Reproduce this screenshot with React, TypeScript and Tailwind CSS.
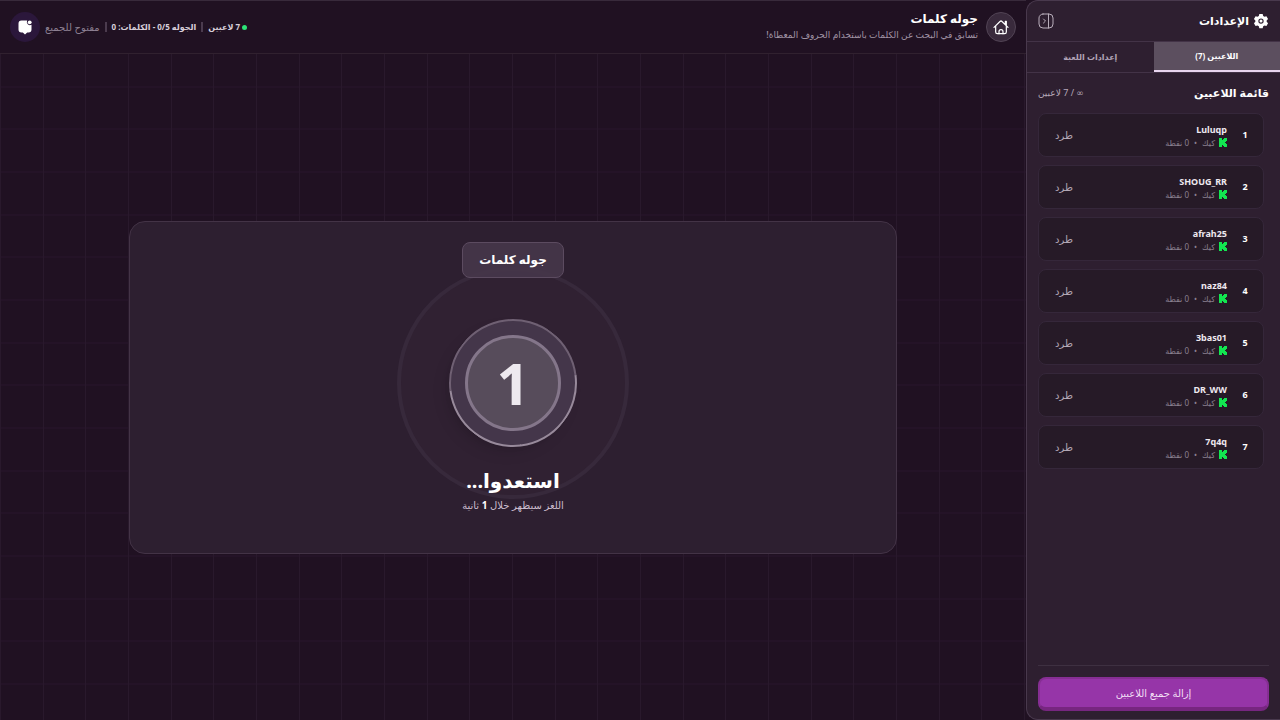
import React from 'react';

const players = ['Luluqp', 'SHOUG_RR', 'afrah25', 'naz84', '3bas01', 'DR_WW', '7q4q'];

const GearIcon = () => (
  <svg viewBox="0 0 24 24" className="size-4" fill="white" aria-hidden="true">
    <path
      fillRule="evenodd"
      d="M9.5 1.500h5l.8 2.900 1.900 1.100 2.900-.8 2.500 4.300-2.100 2.100v2l2.100 2.100-2.500 4.300-2.900-.8-1.900 1.100-.8 2.900h-5l-.8-2.900-1.900-1.100-2.900.8-2.500-4.300 2.100-2.100v-2L1.400 9l2.500-4.300 2.900.8 1.900-1.100.8-2.900ZM12 8.100a4 4 0 1 0 0 8 4 4 0 0 0 0-8Zm0 1.700a2.300 2.300 0 1 1 0 4.600 2.300 2.300 0 0 1 0-4.600Z"
    />
  </svg>
);

const CollapseIcon = () => (
  <svg viewBox="0 0 16 16" className="size-4" fill="none" stroke="currentColor" strokeLinecap="round" strokeLinejoin="round" aria-hidden="true">
    <rect x="1" y="1" width="14" height="14" rx="4" />
    <path d="M10.500 1v14M5.500 6l2 2-2 2" />
  </svg>
);

const HomeIcon = () => (
  <svg viewBox="0 0 24 24" className="size-4" fill="none" stroke="white" strokeWidth="1.800" strokeLinecap="round" strokeLinejoin="round" aria-hidden="true">
    <path d="m1.500 12.500 9-8.800a2.200 2.200 0 0 1 3 0l9 8.800M4 10.500v9A2.500 2.500 0 0 0 6.500 22h11a2.500 2.500 0 0 0 2.500-2.500v-9M18.500 8V3.500H20V9" />
    <path d="M9 22v-3a3 3 0 0 1 6 0v3" />
  </svg>
);

const ChatIcon = () => (
  <svg viewBox="0 0 16 16" className="size-4" fill="white" aria-hidden="true">
    <path d="M4.500 1.500h5.700a3.200 3.200 0 0 0 4.300 4.300v4.700a3 3 0 0 1-3 3h-1.300L8 15.500l-2.200-2H4.500a3 3 0 0 1-3-3v-6a3 3 0 0 1 3-3Z" />
    <circle cx="12.700" cy="3.300" r="1.900" />
  </svg>
);

const KickIcon = () => (
  <svg viewBox="0 0 8 9" className="h-[9px] w-2" fill="#12e650" aria-hidden="true">
    <path d="M0 0h3v2h1V1h1V0h3v3H7v1H6v1h1v1h1v3H5V8H4V7H3v2H0Z" />
  </svg>
);

const PlayerRow = ({ rank, name }: { rank: number; name: string }) => (
  <li className="flex h-11 items-center rounded-lg border border-[#35273a] bg-[#261a27] pr-3 pl-4">
    <span className="w-3 text-center text-[9px] font-bold text-white">{rank}</span>
    <div className="mr-3 flex flex-1 flex-col items-start pt-px">
      <span dir="ltr" className="text-[9px] leading-[14px] font-bold text-[#eee8ef]">{name}</span>
      <span className="flex items-center gap-1 text-[8px] leading-3 text-[#8b8090]">
        <KickIcon />
        <span>كيك</span>
        <span className="px-px">•</span>
        <span>0 نقطة</span>
      </span>
    </div>
    <button type="button" className="text-[10px] text-[#b3a8b6]">طرد</button>
  </li>
);

const Sidebar = () => (
  <aside className="flex w-[254px] shrink-0 flex-col rounded-l-xl border border-r-0 border-[#49394d] bg-[#2e1f30]">
    <div className="flex h-10 items-center justify-between px-[11px]">
      <h2 className="flex items-center gap-1 text-[11px] font-bold text-white">
        <GearIcon />
        الإعدادات
      </h2>
      <button type="button" aria-label="إغلاق" className="text-[#b9aebb]">
        <CollapseIcon />
      </button>
    </div>
    <div role="tablist" className="grid h-8 grid-cols-2 border-y border-[#433347] text-[8px] font-bold">
      <button type="button" role="tab" aria-selected="true" className="border-b-2 border-[#e9d5ef] bg-[#5c4f5f] text-white">
        اللاعبين (7)
      </button>
      <button type="button" role="tab" aria-selected="false" className="text-[#b2a4b6]">
        إعدادات اللعبة
      </button>
    </div>
    <div className="flex h-10 items-center justify-between px-[11px]">
      <h3 className="text-[11px] font-bold text-white">قائمة اللاعبين</h3>
      <span className="text-[9px] text-[#b5a8b8]">∞ / 7 لاعبين</span>
    </div>
    <ul className="flex flex-1 flex-col gap-2 pr-4 pl-[11px]">
      {players.map((name, i) => (
        <PlayerRow key={name} rank={i + 1} name={name} />
      ))}
    </ul>
    <div className="mx-[11px] border-t border-[#3e3041] pt-[11px] pb-2">
      <button
        type="button"
        className="h-[34px] w-full rounded-lg border-2 border-b-4 border-[#862e93] border-b-[#772680] bg-[#9635a8] text-[10px] font-medium text-[#f2dff5]"
      >
        إزالة جميع اللاعبين
      </button>
    </div>
  </aside>
);

const TopBar = () => (
  <header className="flex h-[54px] items-center justify-between border-t border-b border-t-[#382a3b] border-b-[#30212f] bg-[#201122] px-2.5">
    <div className="flex items-center gap-2">
      <a href="#" aria-label="الرئيسية" className="flex size-[30px] items-center justify-center rounded-full border border-[#514354] bg-[#392a3c]">
        <HomeIcon />
      </a>
      <div>
        <h1 className="text-[12px] leading-4 font-bold text-white">جوله كلمات</h1>
        <p className="text-[9px] leading-4 font-medium text-[#a094a5]">تسابق في البحث عن الكلمات باستخدام الحروف المعطاة!</p>
      </div>
    </div>
    <div className="flex items-center gap-[5px] text-[8px] font-bold text-[#d8cfda]">
      <span className="flex items-center gap-0.5">
        <span className="size-[5px] rounded-full bg-[#2ce477]" />
        7 لاعبين
      </span>
      <span className="h-2.5 w-0.5 bg-[#4b3b4e]" />
      <span>الجوله 0/5 - الكلمات: 0</span>
      <span className="h-2.5 w-0.5 bg-[#4b3b4e]" />
      <span className="text-[10px] font-normal text-[#8d8092]">مفتوح للجميع</span>
      <button type="button" aria-label="الدردشة" className="flex size-[30px] items-center justify-center rounded-full bg-[#2b173b]">
        <ChatIcon />
      </button>
    </div>
  </header>
);

const Countdown = () => (
  <section className="flex w-3/4 max-w-3xl flex-col items-center rounded-2xl border border-[#433346] bg-[#2d1f30] pt-5 pb-[38px]">
    <div className="relative z-10 flex h-9 items-center rounded-lg border border-[#5c4b60] bg-[#46364a]/90 px-4 text-[12px] font-bold text-white">
      جوله كلمات
    </div>
    <div className="relative mt-[41px] flex size-32 items-center justify-center">
      <div className="absolute -inset-[52px] rounded-full border-4 border-[#37293b] bg-[#302132]" />
      <div className="absolute inset-0 rotate-[38deg] rounded-full border-2 border-[#6f6073] border-r-[#988a9b] border-b-[#988a9b] bg-[#44364a] shadow-lg" />
      <div className="relative flex size-24 items-center justify-center rounded-full border-[3px] border-[#84768a] bg-[#574c5b]">
        <span className="text-[58px] leading-none font-bold text-[#eee9ef]">1</span>
      </div>
    </div>
    <h2 className="relative mt-5 text-[20px] leading-7 font-bold text-white">استعدوا...</h2>
    <p className="relative text-[10px] leading-5 font-medium text-[#cbbdce]">
      اللغز سيظهر خلال <b className="text-white">1</b> ثانية
    </p>
  </section>
);

export default function App() {
  return (
    <div
      dir="rtl"
      className="flex min-h-screen bg-[#201122] font-['Noto_Sans','DejaVu_Sans',sans-serif]"
    >
      <Sidebar />
      <div className="flex min-w-0 flex-1 flex-col bg-[linear-gradient(to_right,#29192c_1px,transparent_1px,transparent_43px,#29192c_43px,#29192c_44px,transparent_44px,transparent_85px,#29192c_85px,#29192c_86px,transparent_86px),linear-gradient(to_bottom,#241327_2px,transparent_2px,transparent_43px,#241327_43px,#241327_45px,transparent_45px,transparent_86px,#241327_86px,#241327_88px,transparent_88px)] bg-[size:128px_128px]">
        <TopBar />
        <main className="flex flex-1 items-center justify-center">
          <Countdown />
        </main>
      </div>
    </div>
  );
}
